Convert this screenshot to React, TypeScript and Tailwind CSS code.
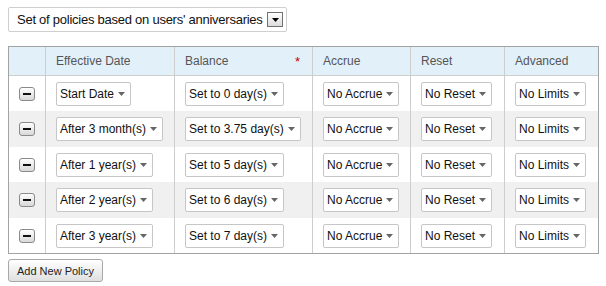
import React from 'react';

type Policy = {
    effective: string;
    balance: string;
};

const policies: Policy[] = [
    { effective: 'Start Date', balance: 'Set to 0 day(s)' },
    { effective: 'After 3 month(s)', balance: 'Set to 3.75 day(s)' },
    { effective: 'After 1 year(s)', balance: 'Set to 5 day(s)' },
    { effective: 'After 2 year(s)', balance: 'Set to 6 day(s)' },
    { effective: 'After 3 year(s)', balance: 'Set to 7 day(s)' },
];

const cols = 'grid grid-cols-[36px_129px_138px_98px_94px_94px]';

function Caret({ color = '#666' }: { color?: string }) {
    return (
        <svg width="7" height="4" viewBox="0 0 7 4" className="shrink-0">
            <path d="M0 0 H7 L3.5 4 Z" fill={color} />
        </svg>
    );
}

function Dropdown({ label }: { label: string }) {
    return (
        <div className="inline-flex h-[24px] items-center gap-[4px] rounded-[2px] border border-[#c6c6c6] bg-white pl-[3px] pr-[5px] text-[12px] text-[#111]">
            <span className="whitespace-nowrap">{label}</span>
            <Caret />
        </div>
    );
}

function MinusButton() {
    return (
        <button className="flex h-[14px] w-[16px] items-center justify-center rounded-[3px] border border-[#8a8a8a] bg-gradient-to-b from-white to-[#d8d8d8]">
            <span className="block h-[2px] w-[8px] bg-[#111]" />
        </button>
    );
}

function HeaderCell({ children, first }: { children?: React.ReactNode; first?: boolean }) {
    return (
        <div className={`flex items-center pl-[10px] pr-[12px] text-[12px] text-[#555] ${first ? '' : 'border-l border-[#cdcdcd]'}`}>
            {children}
        </div>
    );
}

function Cell({ children }: { children: React.ReactNode }) {
    return <div className="flex items-center border-l border-[#cdcdcd] pl-[10px]">{children}</div>;
}

export default function App() {
    return (
        <div className="min-h-[286px] bg-white px-[8px] pt-[7px]" style={{ fontFamily: '"Liberation Sans", Arial, sans-serif' }}>
            <div className="inline-flex h-[25px] w-[279px] items-center justify-between rounded-[2px] border border-[#cfcfcf] bg-white pl-[8px] pr-[3px]">
                <span className="whitespace-nowrap text-[13px] tracking-[-0.25px] text-[#111]">
                    Set of policies based on users' anniversaries
                </span>
                <span className="flex h-[15px] w-[16px] items-center justify-center border border-[#707070] bg-gradient-to-b from-white to-[#dcdcdc]">
                    <Caret color="#000" />
                </span>
            </div>

            <div className="mt-[14px] w-[591px] border border-[#a3a3a3]">
                <div className={`${cols} h-[29px] border-b border-[#cdcdcd] bg-[#e2f0fa]`}>
                    <HeaderCell first />
                    <HeaderCell>Effective Date</HeaderCell>
                    <HeaderCell>
                        <span className="flex w-full items-center justify-between">
                            Balance
                            <span className="text-[13px] leading-none text-[#cc0000]">*</span>
                        </span>
                    </HeaderCell>
                    <HeaderCell>Accrue</HeaderCell>
                    <HeaderCell>Reset</HeaderCell>
                    <HeaderCell>Advanced</HeaderCell>
                </div>

                {policies.map((p, i) => (
                    <div key={i} className={`${cols} ${i % 2 === 1 ? 'h-[36px] bg-[#f0f0f0]' : 'h-[35px] bg-white'}`}>
                        <div className="flex items-center justify-center">
                            <MinusButton />
                        </div>
                        <Cell><Dropdown label={p.effective} /></Cell>
                        <Cell><Dropdown label={p.balance} /></Cell>
                        <Cell><Dropdown label="No Accrue" /></Cell>
                        <Cell><Dropdown label="No Reset" /></Cell>
                        <Cell><Dropdown label="No Limits" /></Cell>
                    </div>
                ))}
            </div>

            <button className="mt-[5px] h-[23px] w-[95px] rounded-[3px] border border-[#a8a8a8] bg-gradient-to-b from-white to-[#e0e0e0] text-[11px] text-[#222]">
                Add New Policy
            </button>
        </div>
    );
}
